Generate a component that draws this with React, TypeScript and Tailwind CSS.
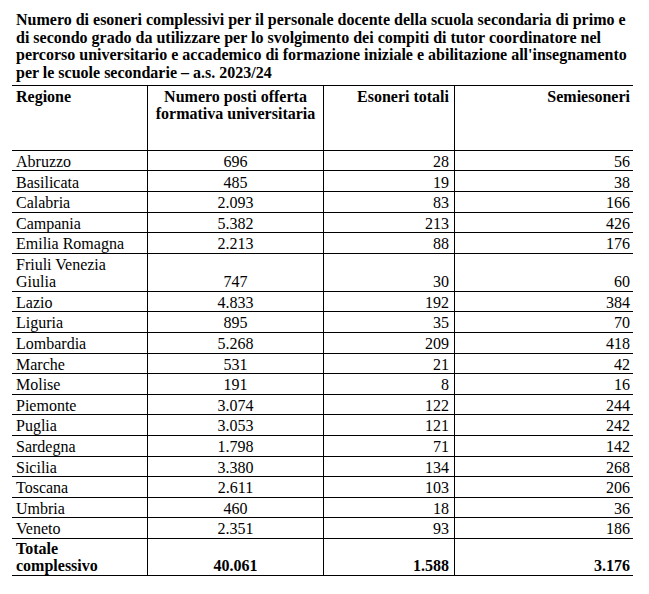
const rows: { regione: string[]; posti: string; esoneri: string; semi: string }[] = [
  { regione: ["Abruzzo"], posti: "696", esoneri: "28", semi: "56" },
  { regione: ["Basilicata"], posti: "485", esoneri: "19", semi: "38" },
  { regione: ["Calabria"], posti: "2.093", esoneri: "83", semi: "166" },
  { regione: ["Campania"], posti: "5.382", esoneri: "213", semi: "426" },
  { regione: ["Emilia Romagna"], posti: "2.213", esoneri: "88", semi: "176" },
  { regione: ["Friuli Venezia", "Giulia"], posti: "747", esoneri: "30", semi: "60" },
  { regione: ["Lazio"], posti: "4.833", esoneri: "192", semi: "384" },
  { regione: ["Liguria"], posti: "895", esoneri: "35", semi: "70" },
  { regione: ["Lombardia"], posti: "5.268", esoneri: "209", semi: "418" },
  { regione: ["Marche"], posti: "531", esoneri: "21", semi: "42" },
  { regione: ["Molise"], posti: "191", esoneri: "8", semi: "16" },
  { regione: ["Piemonte"], posti: "3.074", esoneri: "122", semi: "244" },
  { regione: ["Puglia"], posti: "3.053", esoneri: "121", semi: "242" },
  { regione: ["Sardegna"], posti: "1.798", esoneri: "71", semi: "142" },
  { regione: ["Sicilia"], posti: "3.380", esoneri: "134", semi: "268" },
  { regione: ["Toscana"], posti: "2.611", esoneri: "103", semi: "206" },
  { regione: ["Umbria"], posti: "460", esoneri: "18", semi: "36" },
  { regione: ["Veneto"], posti: "2.351", esoneri: "93", semi: "186" },
];

const grid = "grid grid-cols-[136px_176px_131px_178px] border-b border-black";

type RowProps = {
  regione: string[];
  posti: string;
  esoneri: string;
  semi: string;
  height: string;
  bold?: boolean;
};

function DataRow({ regione, posti, esoneri, semi, height, bold }: RowProps) {
  return (
    <div className={`${grid} ${height} ${bold ? "font-bold" : ""}`}>
      <div className="flex flex-col justify-end border-r border-black pl-1">
        {regione.map((r) => (
          <span key={r}>{r}</span>
        ))}
      </div>
      <div className="flex items-end justify-center border-r border-black">{posti}</div>
      <div className="flex items-end justify-end border-r border-black pr-[5px]">{esoneri}</div>
      <div className="flex items-end justify-end pr-[3px]">{semi}</div>
    </div>
  );
}

export default function App() {
  return (
    <div className="h-[594px] w-[649px] bg-white font-[family-name:Liberation_Serif,serif] text-[16px] leading-[17.5px] text-black">
      <div className="pl-4 pt-[11px] font-bold leading-[17.7px]">
        <div className="whitespace-nowrap">
          Numero di esoneri complessivi per il personale docente della scuola secondaria di primo e
        </div>
        <div className="whitespace-nowrap">
          di secondo grado da utilizzare per lo svolgimento dei compiti di tutor coordinatore nel
        </div>
        <div className="whitespace-nowrap">
          percorso universitario e accademico di formazione iniziale e abilitazione all'insegnamento
        </div>
        <div className="whitespace-nowrap">per le scuole secondarie – a.s. 2023/24</div>
      </div>

      <div className="ml-3 mt-[3px] w-[621px] border-t border-black">
        <div className={`${grid} h-[65px] font-bold`}>
          <div className="border-r border-black pl-1 pt-[2px]">Regione</div>
          <div className="border-r border-black pt-[2px] text-center">
            Numero posti offerta
            <br />
            formativa universitaria
          </div>
          <div className="border-r border-black pr-[5px] pt-[2px] text-right">Esoneri totali</div>
          <div className="pr-[3px] pt-[2px] text-right">Semiesoneri</div>
        </div>

        {rows.map((row) => (
          <DataRow
            key={row.regione.join(" ")}
            {...row}
            height={row.regione.length > 1 ? "h-[38px]" : "h-[20.6px]"}
          />
        ))}

        <DataRow
          regione={["Totale", "complessivo"]}
          posti="40.061"
          esoneri="1.588"
          semi="3.176"
          height="h-[37px]"
          bold
        />
      </div>
    </div>
  );
}
